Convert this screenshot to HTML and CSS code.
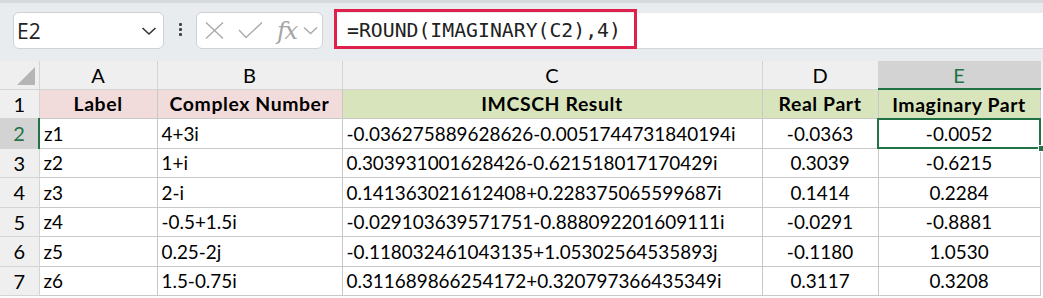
FILE: index.html
```
<!DOCTYPE html>
<html>
<head>
	<meta charset="UTF-8">
	<title>IMCSCH</title>
	<link rel="stylesheet" href="styles.css">
</head>
<body>
	<div class="toolbar">
		<div class="namebox">
			<span>E2</span>
			<svg width="16" height="10" viewBox="0 0 16 10"><polyline points="1.5,2 8,8 14.5,2" fill="none" stroke="#333" stroke-width="1.6"/></svg>
		</div>
		<div class="dots"><i></i><i></i><i></i></div>
		<div class="fxbox">
			<svg width="19" height="17" viewBox="0 0 19 17"><path d="M1 0.5 L18 16.5 M18 0.5 L1 16.5" stroke="#aaa" stroke-width="1.4" fill="none"/></svg>
			<svg width="25" height="17" viewBox="0 0 25 17"><polyline points="1,8 8,15.5 24,0.5" fill="none" stroke="#aaa" stroke-width="1.4"/></svg>
			<span class="fx">fx</span>
			<svg width="15" height="9" viewBox="0 0 15 9"><polyline points="1,1.5 7.5,7.5 14,1.5" fill="none" stroke="#aaa" stroke-width="1.4"/></svg>
		</div>
		<div class="formula">
			<span class="ftext">=ROUND(IMAGINARY(C2),4)</span>
			<div class="highlight"></div>
		</div>
	</div>

	<table class="sheet">
		<colgroup>
			<col style="width:39px">
			<col style="width:118px">
			<col style="width:185px">
			<col style="width:420px">
			<col style="width:116px">
			<col style="width:162px">
			<col>
		</colgroup>
		<thead>
			<tr class="colhead">
				<th class="corner"><span class="tri"></span></th>
				<th>A</th>
				<th>B</th>
				<th>C</th>
				<th>D</th>
				<th class="sel">E</th>
				<th class="rest"></th>
			</tr>
		</thead>
		<tbody>
			<tr class="r1">
				<td class="rh">1</td>
				<td class="pink">Label</td>
				<td class="pink">Complex Number</td>
				<td class="green">IMCSCH Result</td>
				<td class="green">Real Part</td>
				<td class="green">Imaginary Part</td>
				<td class="rest"></td>
			</tr>
			<tr>
				<td class="rh sel">2</td>
				<td>z1</td>
				<td>4+3i</td>
				<td>-0.036275889628626-0.0051744731840194i</td>
				<td class="num">-0.0363</td>
				<td class="num active">-0.0052<span class="handle"></span></td>
				<td class="rest"></td>
			</tr>
			<tr>
				<td class="rh">3</td>
				<td>z2</td>
				<td>1+i</td>
				<td>0.303931001628426-0.621518017170429i</td>
				<td class="num">0.3039</td>
				<td class="num">-0.6215</td>
				<td class="rest"></td>
			</tr>
			<tr>
				<td class="rh">4</td>
				<td>z3</td>
				<td>2-i</td>
				<td>0.141363021612408+0.228375065599687i</td>
				<td class="num">0.1414</td>
				<td class="num">0.2284</td>
				<td class="rest"></td>
			</tr>
			<tr>
				<td class="rh">5</td>
				<td>z4</td>
				<td>-0.5+1.5i</td>
				<td>-0.029103639571751-0.888092201609111i</td>
				<td class="num">-0.0291</td>
				<td class="num">-0.8881</td>
				<td class="rest"></td>
			</tr>
			<tr>
				<td class="rh">6</td>
				<td>z5</td>
				<td>0.25-2j</td>
				<td>-0.118032461043135+1.05302564535893j</td>
				<td class="num">-0.1180</td>
				<td class="num">1.0530</td>
				<td class="rest"></td>
			</tr>
			<tr>
				<td class="rh">7</td>
				<td>z6</td>
				<td>1.5-0.75i</td>
				<td>0.311689866254172+0.320797366435349i</td>
				<td class="num">0.3117</td>
				<td class="num">0.3208</td>
				<td class="rest"></td>
			</tr>
		</tbody>
	</table>
</body>
</html>
```

FILE: styles.css
```
*{
	box-sizing:border-box;
}

body{
	margin:0;
	background:#fff;
	font-family:Lato,"Liberation Sans",sans-serif;
	color:#000;
}

/* formula bar */
.toolbar{
	display:flex;
	align-items:flex-start;
	height:61px;
	padding:9px 0 0 13px;
	background:#e9ecef;
	border-top:3px solid #d6d9dd;
}

.namebox{
	display:flex;
	align-items:center;
	justify-content:space-between;
	width:151px;
	height:37px;
	padding:0 6px 0 3px;
	background:#fff;
	border:1px solid #cfd1d4;
	border-radius:6px;
	font-family:"Open Sans",sans-serif;
	font-size:21px;
	color:#222;
}

.dots{
	display:flex;
	flex-direction:column;
	align-items:center;
	gap:2px;
	width:32px;
	padding-top:11px;
}

.dots i{
	width:3px;
	height:3px;
	background:#444;
	border-radius:1px;
}

.fxbox{
	display:flex;
	align-items:center;
	width:127px;
	height:37px;
	padding-left:8px;
	background:#fff;
	border:1px solid #cfd1d4;
	border-radius:6px;
}

.fxbox svg{
	margin-right:14px;
}

.fxbox svg:last-child{
	margin-right:0;
}

.fx{
	font-family:"DejaVu Serif","Liberation Serif",serif;
	font-style:italic;
	font-size:24px;
	color:#a5a5a5;
	margin-right:7px;
	letter-spacing:-1.5px;
	line-height:1;
}

.formula{
	position:relative;
	flex:1;
	height:36px;
	margin-left:11px;
	margin-top:1px;
	background:#fff;
	border-bottom:1px solid #d4d6d9;
}

.ftext{
	display:block;
	padding-left:13px;
	line-height:35px;
	font-family:"DejaVu Sans Mono","Liberation Mono",monospace;
	font-size:19.8px;
	color:#222;
}

.highlight{
	position:absolute;
	left:0;
	top:-4px;
	width:303px;
	height:40px;
	border:3px solid #e0204c;
}

/* grid */
.sheet{
	border-collapse:collapse;
	table-layout:fixed;
	width:1043px;
	font-size:18.9px;
}

.sheet th,
.sheet td{
	border:1px solid #c8c8c8;
	padding:0 4px;
	white-space:nowrap;
	overflow:hidden;
}

.colhead th{
	height:28px;
	background:#efefef;
	font-weight:normal;
	border-top:none;
	border-color:#d4d4d4;
	font-size:20px;
}

.colhead th.sel{
	background:#d3d3d3;
	color:#217346;
	border-bottom:2px solid #217346;
}

.corner{
	position:relative;
	border-left:none !important;
}

.tri{
	position:absolute;
	right:4px;
	bottom:4px;
	width:0;
	height:0;
	border-left:18px solid transparent;
	border-bottom:18px solid #b5b5b5;
}

.sheet tbody tr{
	height:29.5px;
}

.rh{
	background:#efefef;
	text-align:center;
	border-left:none !important;
	border-color:#d4d4d4 !important;
	font-size:20px;
}

.rh.sel{
	background:#d3d3d3;
	color:#217346;
	border-right:2px solid #217346 !important;
}

.rest{
	border:none !important;
	background:#fff;
}

.colhead .rest{
	background:#efefef;
}

.r1 td{
	font-weight:bold;
	text-align:center;
	letter-spacing:0.6px;
	font-size:19.4px;
}

.r1 td.rh{
	font-weight:normal;
	letter-spacing:0;
	font-size:20px;
}

.pink{
	background:#f2dcdb;
}

.green{
	background:#d8e4bc;
}

.num{
	text-align:center;
}

.active{
	position:relative;
	overflow:visible !important;
	outline:2px solid #217346;
	outline-offset:-1px;
}

.handle{
	position:absolute;
	right:-5px;
	bottom:-4px;
	width:7px;
	height:7px;
	background:#217346;
	border:1px solid #fff;
}
```
